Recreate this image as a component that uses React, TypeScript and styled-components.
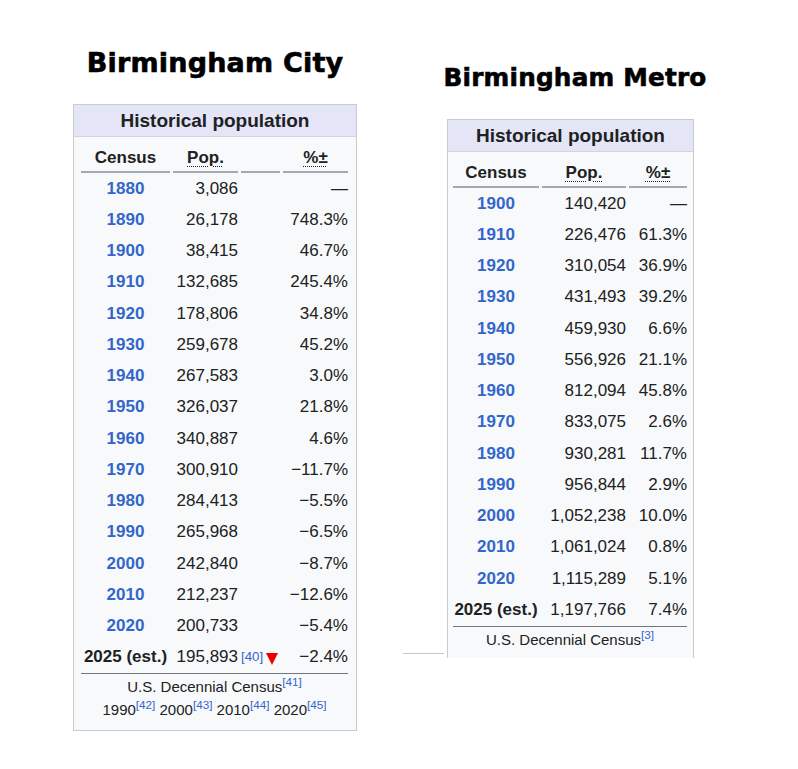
import React from "react";
import styled, { createGlobalStyle } from "styled-components";

const GlobalStyle = createGlobalStyle`
  html, body {
    margin: 0;
    padding: 0;
    background: #ffffff;
  }
  body {
    font-family: "Liberation Sans", Arial, sans-serif;
    color: #202122;
  }
`;

type Row = { year: string; pop: string; change: string };

const cityRows: Row[] = [
  { year: "1880", pop: "3,086", change: "—" },
  { year: "1890", pop: "26,178", change: "748.3%" },
  { year: "1900", pop: "38,415", change: "46.7%" },
  { year: "1910", pop: "132,685", change: "245.4%" },
  { year: "1920", pop: "178,806", change: "34.8%" },
  { year: "1930", pop: "259,678", change: "45.2%" },
  { year: "1940", pop: "267,583", change: "3.0%" },
  { year: "1950", pop: "326,037", change: "21.8%" },
  { year: "1960", pop: "340,887", change: "4.6%" },
  { year: "1970", pop: "300,910", change: "−11.7%" },
  { year: "1980", pop: "284,413", change: "−5.5%" },
  { year: "1990", pop: "265,968", change: "−6.5%" },
  { year: "2000", pop: "242,840", change: "−8.7%" },
  { year: "2010", pop: "212,237", change: "−12.6%" },
  { year: "2020", pop: "200,733", change: "−5.4%" },
];

const metroRows: Row[] = [
  { year: "1900", pop: "140,420", change: "—" },
  { year: "1910", pop: "226,476", change: "61.3%" },
  { year: "1920", pop: "310,054", change: "36.9%" },
  { year: "1930", pop: "431,493", change: "39.2%" },
  { year: "1940", pop: "459,930", change: "6.6%" },
  { year: "1950", pop: "556,926", change: "21.1%" },
  { year: "1960", pop: "812,094", change: "45.8%" },
  { year: "1970", pop: "833,075", change: "2.6%" },
  { year: "1980", pop: "930,281", change: "11.7%" },
  { year: "1990", pop: "956,844", change: "2.9%" },
  { year: "2000", pop: "1,052,238", change: "10.0%" },
  { year: "2010", pop: "1,061,024", change: "0.8%" },
  { year: "2020", pop: "1,115,289", change: "5.1%" },
];

const Page = styled.div`
  display: flex;
  align-items: flex-start;
  gap: 90px;
  padding-left: 73px;
  min-height: 769px;
  box-sizing: border-box;
`;

const Column = styled.section<{ $top: number; $width: number }>`
  display: flex;
  flex-direction: column;
  align-items: center;
  width: ${(p) => p.$width}px;
  padding-top: ${(p) => p.$top}px;
`;

const Title = styled.h1<{ $size: number; $shift?: number }>`
  margin: 0 0 24px ${(p) => p.$shift ?? 0}px;
  font-family: "DejaVu Sans", "Liberation Sans", sans-serif;
  font-weight: 700;
  font-size: ${(p) => p.$size}px;
  line-height: 34px;
  letter-spacing: 0.2px;
  color: #000;
  white-space: nowrap;
  -webkit-text-stroke: 0.6px #000;
`;

const Box = styled.div<{ $open?: boolean }>`
  position: relative;
  width: 100%;
  box-sizing: border-box;
  background: #f8f9fa;
  border: 1px solid #c8ccd1;
  border-bottom: ${(p) => (p.$open ? "none" : "1px solid #c8ccd1")};
  font-size: 17px;
`;

const StrayLine = styled.div`
  position: absolute;
  left: -45px;
  bottom: 4px;
  width: 41px;
  height: 1px;
  background: #c3c6ca;
`;

const Caption = styled.div`
  height: 31px;
  line-height: 31px;
  background: #e4e5f7;
  border-bottom: 1px solid #d0d3e0;
  text-align: center;
  font-weight: 700;
  font-size: 19px;
`;

const Body = styled.div<{ $pad: string }>`
  padding: ${(p) => p.$pad};
`;

const Cols = styled.div<{ $cols: string }>`
  display: grid;
  grid-template-columns: ${(p) => p.$cols};
  column-gap: 3px;
`;

const HeadCell = styled.div`
  padding: 10px 0 2px;
  line-height: 22px;
  border-bottom: 2px solid #a2a9b1;
  text-align: center;
  font-weight: 700;
`;

const Abbr = styled.span`
  text-decoration: underline dotted;
  text-underline-offset: 3px;
  text-decoration-thickness: 1px;
`;

const DataRow = styled(Cols)`
  height: 31.25px;
  align-items: center;
  white-space: nowrap;
`;

const YearCell = styled.div<{ $plain?: boolean }>`
  text-align: center;
  font-weight: 700;
  color: ${(p) => (p.$plain ? "#202122" : "#3366cc")};
`;

const NumCell = styled.div`
  text-align: right;
`;

const NoteCell = styled.div`
  display: flex;
  align-items: center;
`;

const Sup = styled.sup`
  font-size: 0.78em;
  line-height: 0;
  vertical-align: super;
  color: #3366cc;
`;

const DownMark = styled.svg`
  margin: 3px 0 0 3px;
`;

const Footer = styled.div<{ $bottom: number }>`
  border-top: 1px solid #72777d;
  padding: 1px 0 ${(p) => p.$bottom}px;
  text-align: center;
  font-size: 15px;
  line-height: 23px;
  white-space: nowrap;
`;

const Triangle = () => (
  <DownMark width="12" height="12" viewBox="0 0 12 12">
    <polygon points="0,0 12,0 6,12" fill="#ee0000" />
  </DownMark>
);

const CITY_COLS = "89px 65px 39px 65px";
const METRO_COLS = "86px 84px 58px";

export default function App() {
  return (
    <>
      <GlobalStyle />
      <Page>
        <Column $top={46} $width={284}>
          <Title $size={27}>Birmingham City</Title>
          <Box>
            <Caption>Historical population</Caption>
            <Body $pad="0 8px 0 7px">
              <Cols $cols={CITY_COLS}>
                <HeadCell>Census</HeadCell>
                <HeadCell>
                  <Abbr>Pop.</Abbr>
                </HeadCell>
                <HeadCell />
                <HeadCell>
                  <Abbr>%±</Abbr>
                </HeadCell>
              </Cols>
              {cityRows.map((r) => (
                <DataRow $cols={CITY_COLS} key={r.year}>
                  <YearCell>{r.year}</YearCell>
                  <NumCell>{r.pop}</NumCell>
                  <NoteCell />
                  <NumCell>{r.change}</NumCell>
                </DataRow>
              ))}
              <DataRow $cols={CITY_COLS}>
                <YearCell $plain>2025 (est.)</YearCell>
                <NumCell>195,893</NumCell>
                <NoteCell>
                  <Sup>[40]</Sup>
                  <Triangle />
                </NoteCell>
                <NumCell>−2.4%</NumCell>
              </DataRow>
              <Footer $bottom={9}>
                <div>
                  U.S. Decennial Census<Sup>[41]</Sup>
                </div>
                <div>
                  1990<Sup>[42]</Sup> 2000<Sup>[43]</Sup> 2010<Sup>[44]</Sup>{" "}
                  2020<Sup>[45]</Sup>
                </div>
              </Footer>
            </Body>
          </Box>
        </Column>

        <Column $top={61} $width={247}>
          <Title $size={24.7} $shift={9}>
            Birmingham Metro
          </Title>
          <Box $open>
            <StrayLine />
            <Caption>Historical population</Caption>
            <Body $pad="0 6px 0 5px">
              <Cols $cols={METRO_COLS}>
                <HeadCell>Census</HeadCell>
                <HeadCell>
                  <Abbr>Pop.</Abbr>
                </HeadCell>
                <HeadCell>
                  <Abbr>%±</Abbr>
                </HeadCell>
              </Cols>
              {metroRows.map((r) => (
                <DataRow $cols={METRO_COLS} key={r.year}>
                  <YearCell>{r.year}</YearCell>
                  <NumCell>{r.pop}</NumCell>
                  <NumCell>{r.change}</NumCell>
                </DataRow>
              ))}
              <DataRow $cols={METRO_COLS}>
                <YearCell $plain>2025 (est.)</YearCell>
                <NumCell>1,197,766</NumCell>
                <NumCell>7.4%</NumCell>
              </DataRow>
              <Footer $bottom={7}>
                U.S. Decennial Census<Sup>[3]</Sup>
              </Footer>
            </Body>
          </Box>
        </Column>
      </Page>
    </>
  );
}
